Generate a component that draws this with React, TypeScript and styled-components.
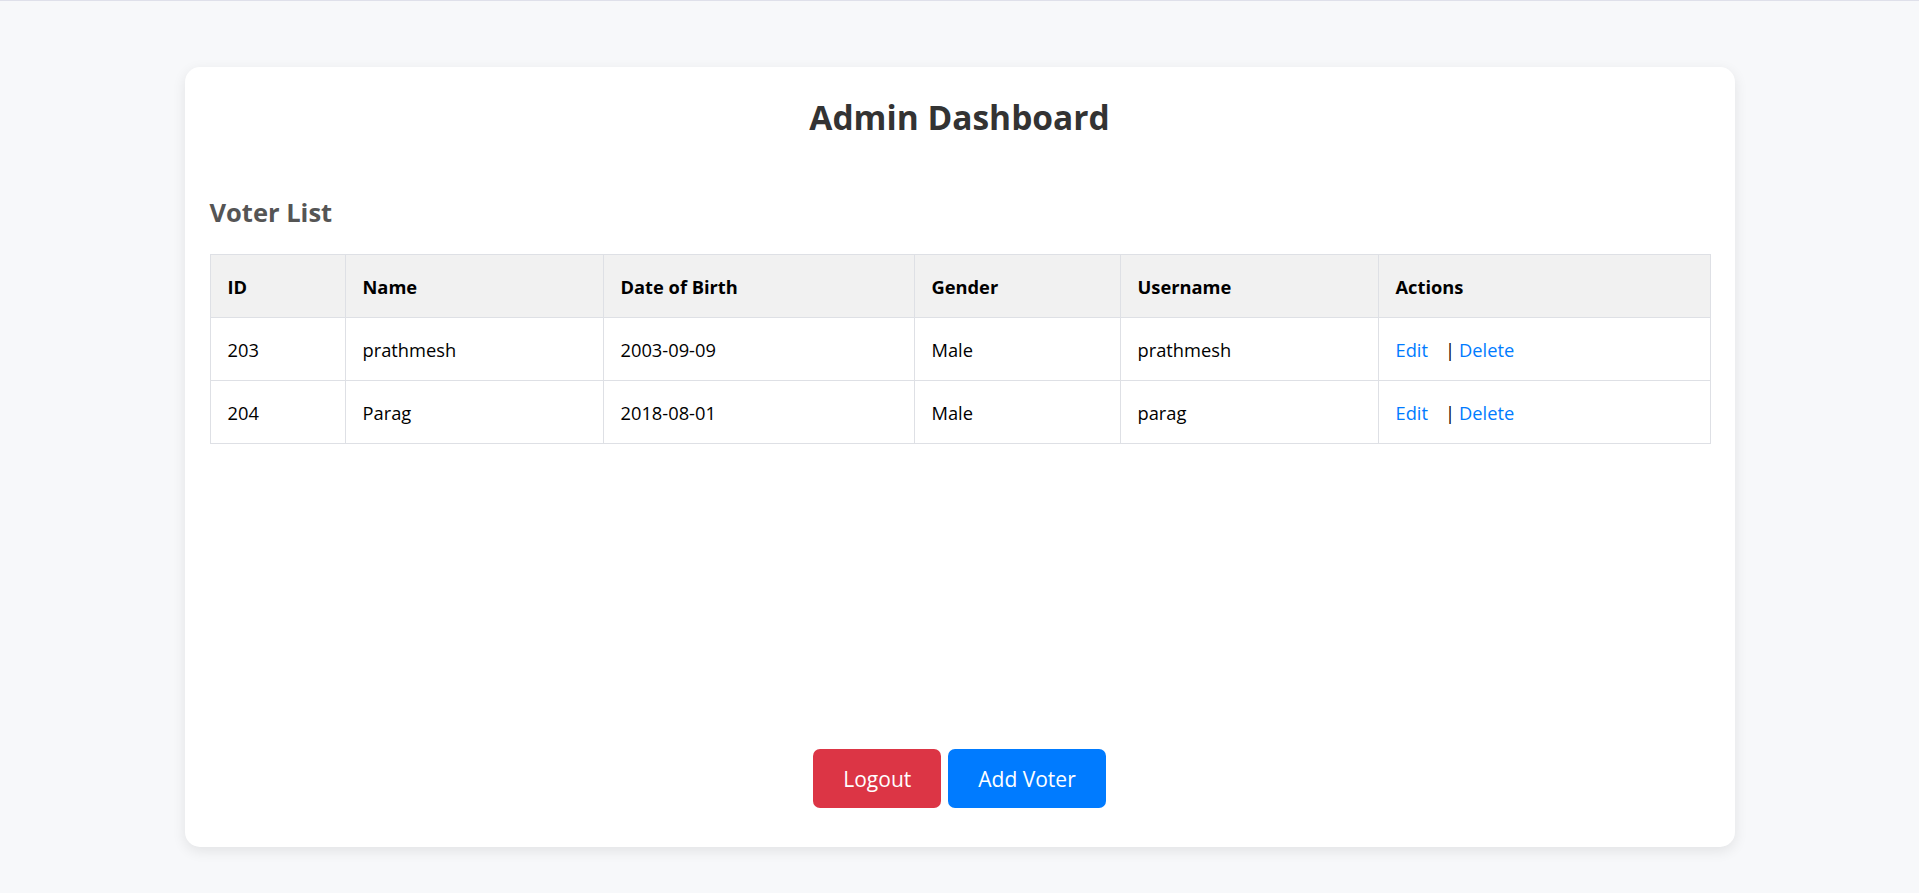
import React from 'react';
import styled, { createGlobalStyle } from 'styled-components';

interface Voter {
  id: number;
  name: string;
  dob: string;
  gender: string;
  username: string;
}

const voters: Voter[] = [
  { id: 203, name: 'prathmesh', dob: '2003-09-09', gender: 'Male', username: 'prathmesh' },
  { id: 204, name: 'Parag', dob: '2018-08-01', gender: 'Male', username: 'parag' },
];

const columns = [
  { label: 'ID', width: 135 },
  { label: 'Name', width: 258 },
  { label: 'Date of Birth', width: 311 },
  { label: 'Gender', width: 206 },
  { label: 'Username', width: 258 },
  { label: 'Actions', width: 332 },
];

const GlobalStyle = createGlobalStyle`
  * {
    box-sizing: border-box;
  }

  body {
    margin: 0;
    font-family: "Open Sans", "Noto Sans", Arial, sans-serif;
    background: #f7f8fa;
    color: #000;
  }
`;

const App: React.FC = () => {
  return (
    <>
      <GlobalStyle />
      <Page>
        <Card>
          <Title>Admin Dashboard</Title>
          <SectionTitle>Voter List</SectionTitle>
          <Table>
            <colgroup>
              {columns.map((col) => (
                <col key={col.label} style={{ width: col.width }} />
              ))}
            </colgroup>
            <thead>
              <tr>
                {columns.map((col) => (
                  <HeadCell key={col.label}>{col.label}</HeadCell>
                ))}
              </tr>
            </thead>
            <tbody>
              {voters.map((voter) => (
                <tr key={voter.id}>
                  <Cell>{voter.id}</Cell>
                  <Cell>{voter.name}</Cell>
                  <Cell>{voter.dob}</Cell>
                  <Cell>{voter.gender}</Cell>
                  <Cell>{voter.username}</Cell>
                  <Cell>
                    <ActionLink href="#">Edit</ActionLink>
                    <Divider>|</Divider>
                    <ActionLink href="#">Delete</ActionLink>
                  </Cell>
                </tr>
              ))}
            </tbody>
          </Table>
          <ButtonRow>
            <Button variant="danger">Logout</Button>
            <Button variant="primary">Add Voter</Button>
          </ButtonRow>
        </Card>
      </Page>
    </>
  );
};

const Page = styled.div`
  min-height: 100vh;
  border-top: 1px solid #dfe0ea;
  padding: 66px 0 46px;
`;

const Card = styled.div`
  width: 1550px;
  height: 780px;
  margin: 0 auto;
  padding: 25px;
  background: #fff;
  border-radius: 15px;
  box-shadow: 0 4px 14px rgba(0, 0, 0, 0.09);
  display: flex;
  flex-direction: column;
`;

const Title = styled.h1`
  margin: 0 0 50px;
  text-align: center;
  font-size: 33.5px;
  line-height: 51px;
  font-weight: 700;
  color: #333;
`;

const SectionTitle = styled.h2`
  margin: 0 0 23px;
  font-size: 25.5px;
  line-height: 38px;
  font-weight: 700;
  color: #555;
`;

const Table = styled.table`
  width: 1500px;
  table-layout: fixed;
  border-collapse: collapse;
`;

const HeadCell = styled.th`
  height: 63px;
  padding: 0 17px;
  text-align: left;
  font-size: 18.3px;
  font-weight: 700;
  background: #f1f1f1;
  border: 1px solid #dee0e5;
`;

const Cell = styled.td`
  height: 63px;
  padding: 0 17px;
  font-size: 18.3px;
  border: 1px solid #dee0e5;
`;

const ActionLink = styled.a`
  color: #007bff;
  text-decoration: none;
`;

const Divider = styled.span`
  margin: 0 4px 0 17px;
  color: #000;
`;

const ButtonRow = styled.div`
  margin-top: auto;
  margin-bottom: 14px;
  display: flex;
  justify-content: center;
  gap: 7px;
`;

const Button = styled.button<{ variant: 'danger' | 'primary' }>`
  height: 59px;
  padding: 0 30px;
  border: none;
  border-radius: 7px;
  font-family: inherit;
  font-size: 21px;
  color: #fff;
  cursor: pointer;
  background: ${({ variant }) => (variant === 'danger' ? '#dc3545' : '#007bff')};
`;

export default App;
